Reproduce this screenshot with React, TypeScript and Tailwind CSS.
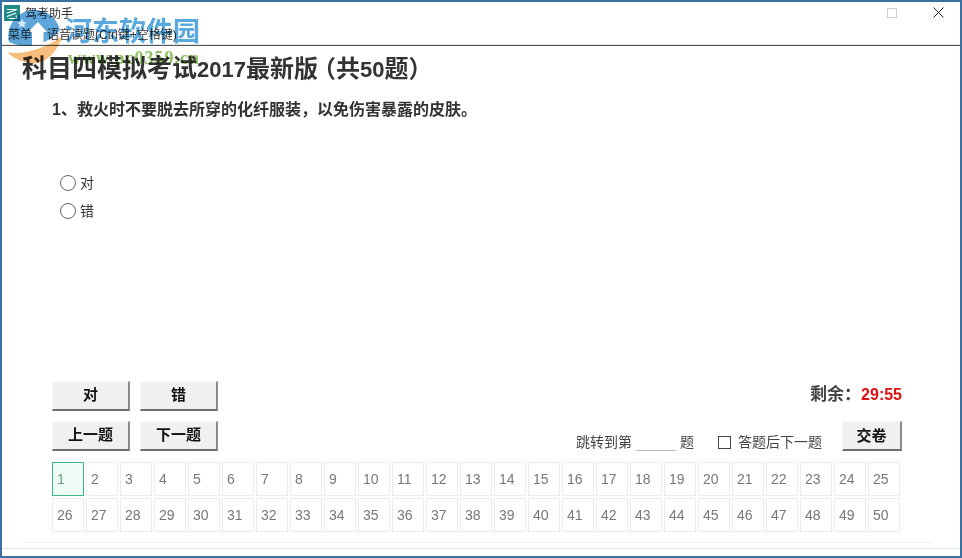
import React from "react";

const sans = "font-['Liberation_Sans','Noto_Sans_CJK_SC',sans-serif]";
const row1 = Array.from({ length: 25 }, (_, i) => i + 1);
const row2 = Array.from({ length: 25 }, (_, i) => i + 26);

function Btn({ label, w = "w-[78px]" }: { label: string; w?: string }) {
  return (
    <button
      className={`${w} h-[30px] bg-[#f0f0f0] border-b-2 border-r-2 border-t border-l border-t-[#f8f8f8] border-l-[#f8f8f8] border-b-[#6e6e6e] border-r-[#8a8a8a] text-[15px] font-bold text-[#111]`}
    >
      {label}
    </button>
  );
}

function Cell({ n }: { n: number }) {
  const active = n === 1;
  return (
    <div
      className={`w-[32px] h-[34px] shrink-0 flex items-center text-[14px] border pl-[4px] ${
        active
          ? "border-[#3cb883] bg-[#effcf5] text-[#6a9a80]"
          : "border-[#ececec] bg-white text-[#777]"
      }`}
    >
      {n}
    </div>
  );
}

function Radio({ label }: { label: string }) {
  return (
    <div className="flex items-center h-[28px] text-[14px] text-[#333]">
      <span className="w-[16px] h-[16px] rounded-full border border-[#666] bg-white mr-[4px]" />
      {label}
    </div>
  );
}

export default function App() {
  return (
    <div className={`${sans} relative w-[962px] h-[558px] overflow-hidden bg-white border-x-2 border-b-2 border-t-2 border-[#3b6f9f] flex flex-col`}>
      {/* title bar */}
      <div className="h-[21px] flex items-center pl-[2px] text-[12px] text-[#333] shrink-0">
        <svg width="16" height="16" viewBox="0 0 16 16" className="mr-[5px] mt-[1px]">
          <rect x="0" y="0" width="16" height="16" fill="#1f8a86" />
          <path d="M3 4.5h10M3 8l9-3M3 11.5l9-3.5M5 13.5h8l-1-3" stroke="#fff" strokeWidth="1.2" fill="none" />
        </svg>
        <span className="mt-[2px]">驾考助手</span>
        <div className="ml-auto flex items-center">
          <svg width="10" height="10" viewBox="0 0 10 10" className="mr-[36px]">
            <rect x="0.5" y="0.5" width="9" height="9" fill="none" stroke="#ccc" />
          </svg>
          <svg width="11" height="11" viewBox="0 0 11 11" className="mr-[16px]">
            <path d="M0.5 0.5l10 10M10.5 0.5l-10 10" stroke="#222" strokeWidth="1" />
          </svg>
        </div>
      </div>
      {/* menu bar */}
      <div className="h-[23px] flex items-center pl-[6px] pt-[2px] text-[12px] text-[#333] border-b border-[#555] shrink-0 shadow-[inset_0_-1px_0_#e4e4e4]">
        <span className="mr-[15px]">菜单</span>
        <span>语音读题(Ctrl键+空格键)</span>
      </div>

      {/* exam body */}
      <div className="flex-1 flex flex-col min-h-0">
        <h1 className="pl-[20px] pt-[7px] h-[45px] text-[22px] leading-[30px] font-bold text-[#333] whitespace-nowrap">
          <span className="text-[25px]">科目四模拟考试</span>2017<span className="text-[24px]">最新版<span className="ml-[-6px]">（共</span></span>50<span className="text-[24px]">题）</span>
        </h1>
        <p className="pl-[50px] pt-[9px] h-[35px] text-[16px] leading-[20px] font-bold text-[#333] whitespace-nowrap">
          1、救火时不要脱去所穿的化纤服装，以免伤害暴露的皮肤。
        </p>
        <div className="pl-[58px] pt-[43px] h-[255px]">
          <Radio label="对" />
          <Radio label="错" />
        </div>

        {/* buttons */}
        <div className="pl-[50px] pr-[58px] flex items-start justify-between h-[40px]">
          <div className="flex gap-[10px]">
            <Btn label="对" />
            <Btn label="错" />
          </div>
          <div className="pt-[4px] text-[16px] font-bold text-[#444] leading-[20px]">
            <span className="text-[17px]">剩余：</span><span className="text-[#e01010]">29:55</span>
          </div>
        </div>
        <div className="pl-[50px] pr-[58px] flex items-start justify-between h-[41px]">
          <div className="flex gap-[10px]">
            <Btn label="上一题" />
            <Btn label="下一题" />
          </div>
          <div className="flex items-end h-[30px] text-[14px] leading-[18px] text-[#444]">
            <span>跳转到第</span>
            <span className="w-[40px] h-[17px] mx-[4px] border-b border-[#bbb]" />
            <span>题</span>
            <span className="w-[13px] h-[13px] border border-[#444] ml-[24px] mr-[7px] mb-[2px]" />
            <span className="mr-[20px]">答题后下一题</span>
            <Btn label="交卷" w="w-[60px]" />
          </div>
        </div>

        {/* number grid */}
        <div className="pl-[50px] flex flex-col gap-[2px]">
          <div className="flex gap-[2px]">
            {row1.map((n) => (
              <Cell key={n} n={n} />
            ))}
          </div>
          <div className="flex gap-[2px]">
            {row2.map((n) => (
              <Cell key={n} n={n} />
            ))}
          </div>
        </div>
        <div className="mt-[10px] ml-[20px] mr-[28px] border-t border-[#eef2f2]" />
        <div className="mt-[5px] border-t border-[#dbe5ea]" />
      </div>

      {/* site watermark */}
      <div className="absolute left-0 top-0 w-[210px] h-[70px] pointer-events-none mix-blend-multiply">
        <svg width="70" height="70" viewBox="0 0 70 70" className="absolute left-[-2px] top-[-2px]">
          <path d="M9 42A26 26 0 1 1 60 30C50 42 30 52 9 42Z" fill="#5ea6da" />
          <path d="M38 22L47 32H43.5V46H32V32H28Z" fill="#fff" />
          <path d="M22 19l1.5 3 3 .5-2.2 2 .5 3-2.8-1.5-2.8 1.5.5-3-2.2-2 3-.5z" fill="#d8ebf8" />
          <path d="M8 52C20 56 48 48 62 36C58 52 44 66 30 63C20 61 12 58 8 52Z" fill="#f6bd7c" />
        </svg>
        <span className="absolute left-[63px] top-[10px] text-[27px] leading-[36px] font-bold text-[#5aa9de] whitespace-nowrap font-['Noto_Sans_CJK_SC',sans-serif]">
          河东软件园
        </span>
        <span className="absolute left-[66px] top-[46px] text-[18px] leading-[20px] font-bold text-[#8fc265] whitespace-nowrap font-['Liberation_Serif',serif] tracking-[1px]">
          www.pc0359.cn
        </span>
      </div>
    </div>
  );
}
